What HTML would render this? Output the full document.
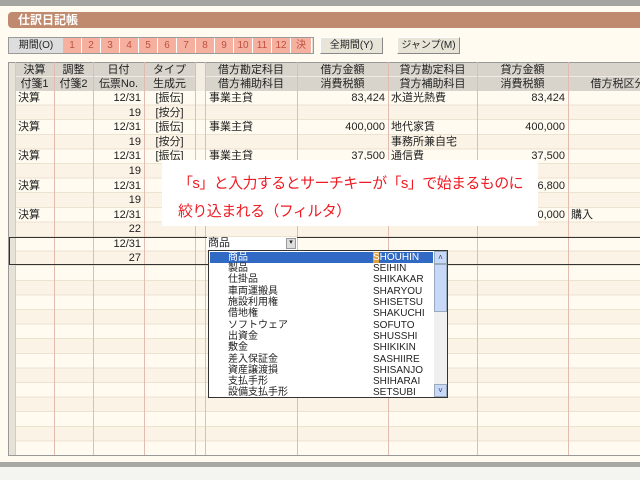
<!DOCTYPE html>
<html><head><meta charset="utf-8"><style>
*{margin:0;padding:0;box-sizing:border-box}
body{width:640px;height:480px;overflow:hidden;background:#fffbf0;font-family:"Liberation Sans","Noto Sans CJK JP",sans-serif;font-size:11px;color:#222;position:relative}
.a{position:absolute}
.t{position:absolute;white-space:nowrap;line-height:14px}
.r{text-align:right}
.c{text-align:center}
.pc{position:absolute;top:38px;height:15px;width:19px;background:#f5b0a0;border-right:1px solid #fff;color:#c05040;text-align:center;line-height:15px;font-size:10px}
.btn{position:absolute;top:37px;height:17px;background:#e8e4d8;border:1px solid;border-color:#fff #888 #888 #fff;text-align:center;line-height:15px;font-size:10px}
.vl{position:absolute;top:62px;height:393px;width:1px;background:#e2bcb0}
.hd{position:absolute;height:14px;line-height:14px;text-align:center;font-size:11px}
.li{position:absolute;left:228px;font-size:10px;line-height:11.2px;white-space:nowrap}
.lr{position:absolute;left:373px;font-size:10px;line-height:11.2px}
</style></head><body>
<div class="a" style="left:0;top:0;width:640px;height:6px;background:#a4a4a0"></div>
<div class="a" style="left:8px;top:12px;width:632px;height:16px;background:#c08a6e;border-radius:4px 0 0 4px"></div>
<div class="t" style="left:18px;top:13px;color:#fff;font-weight:bold;font-size:12px">仕訳日記帳</div>

<div class="a" style="left:8px;top:37px;width:306px;height:17px;border:1px solid #999;background:#ddd"></div>
<div class="t c" style="left:10px;top:38px;width:52px;font-size:10px;line-height:15px">期間(O)</div>
<div class="pc" style="left:63px">1</div><div class="pc" style="left:82px">2</div><div class="pc" style="left:101px">3</div><div class="pc" style="left:120px">4</div><div class="pc" style="left:139px">5</div><div class="pc" style="left:158px">6</div><div class="pc" style="left:177px">7</div><div class="pc" style="left:196px">8</div><div class="pc" style="left:215px">9</div><div class="pc" style="left:234px">10</div><div class="pc" style="left:253px">11</div><div class="pc" style="left:272px">12</div><div class="pc" style="left:291px;width:21px">決</div>
<div class="btn" style="left:320px;width:63px">全期間(Y)</div>
<div class="btn" style="left:397px;width:63px">ジャンプ(M)</div>

<div class="a" style="left:8px;top:62px;width:640px;height:394px;border:1px solid #999;border-right:none;background:#fffbf0"></div>
<div class="a" style="left:9px;top:63px;width:631px;height:28px;background:#d8d4cc"></div>
<div class="a" style="left:15px;top:76px;width:625px;height:1px;background:#f0ece4"></div>
<div class="a" style="left:9px;top:63px;width:6px;height:392px;background:#e6e2d8"></div>
<div class="a" style="left:195px;top:63px;width:10px;height:392px;background:#f3ece0"></div>
<div class="a" style="left:15px;top:91px;width:625px;height:364px;background:repeating-linear-gradient(#fffbf0 0,#fffbf0 13.6px,#ece2d0 13.6px,#ece2d0 14.6px,#fbf3e6 14.6px,#fbf3e6 28.2px,#ece2d0 28.2px,#ece2d0 29.2px)"></div>
<div class="vl" style="left:54px"></div><div class="vl" style="left:93px"></div><div class="vl" style="left:144px"></div><div class="vl" style="left:195px"></div><div class="vl" style="left:205px"></div><div class="vl" style="left:297px"></div><div class="vl" style="left:388px"></div><div class="vl" style="left:477px"></div><div class="vl" style="left:568px"></div>
<div class="vl" style="left:15px;background:#ccc"></div>

<div class="hd" style="left:15px;top:63px;width:39px">決算</div><div class="hd" style="left:54px;top:63px;width:39px">調整</div><div class="hd" style="left:93px;top:63px;width:51px">日付</div><div class="hd" style="left:144px;top:63px;width:51px">タイプ</div><div class="hd" style="left:205px;top:63px;width:92px">借方勘定科目</div><div class="hd" style="left:297px;top:63px;width:91px">借方金額</div><div class="hd" style="left:388px;top:63px;width:89px">貸方勘定科目</div><div class="hd" style="left:477px;top:63px;width:91px">貸方金額</div>
<div class="hd" style="left:15px;top:77px;width:39px">付箋1</div><div class="hd" style="left:54px;top:77px;width:39px">付箋2</div><div class="hd" style="left:93px;top:77px;width:51px">伝票No.</div><div class="hd" style="left:144px;top:77px;width:51px">生成元</div><div class="hd" style="left:205px;top:77px;width:92px">借方補助科目</div><div class="hd" style="left:297px;top:77px;width:91px">消費税額</div><div class="hd" style="left:388px;top:77px;width:89px">貸方補助科目</div><div class="hd" style="left:477px;top:77px;width:91px">消費税額</div><div class="hd" style="left:568px;top:77px;width:100px">借方税区分</div>

<div class="t" style="left:18px;top:91px">決算</div><div class="t r" style="left:93px;top:91px;width:48px">12/31</div><div class="t c" style="left:144px;top:91px;width:51px">[振伝]</div><div class="t" style="left:209px;top:91px">事業主貸</div><div class="t r" style="left:297px;top:91px;width:88px">83,424</div><div class="t" style="left:391px;top:91px">水道光熱費</div><div class="t r" style="left:477px;top:91px;width:88px">83,424</div>
<div class="t r" style="left:93px;top:105.6px;width:48px">19</div><div class="t c" style="left:144px;top:105.6px;width:51px">[按分]</div>
<div class="t" style="left:18px;top:120.2px">決算</div><div class="t r" style="left:93px;top:120.2px;width:48px">12/31</div><div class="t c" style="left:144px;top:120.2px;width:51px">[振伝]</div><div class="t" style="left:209px;top:120.2px">事業主貸</div><div class="t r" style="left:297px;top:120.2px;width:88px">400,000</div><div class="t" style="left:391px;top:120.2px">地代家賃</div><div class="t r" style="left:477px;top:120.2px;width:88px">400,000</div>
<div class="t r" style="left:93px;top:134.8px;width:48px">19</div><div class="t c" style="left:144px;top:134.8px;width:51px">[按分]</div><div class="t" style="left:391px;top:134.8px">事務所兼自宅</div>
<div class="t" style="left:18px;top:149.4px">決算</div><div class="t r" style="left:93px;top:149.4px;width:48px">12/31</div><div class="t c" style="left:144px;top:149.4px;width:51px">[振伝]</div><div class="t" style="left:209px;top:149.4px">事業主貸</div><div class="t r" style="left:297px;top:149.4px;width:88px">37,500</div><div class="t" style="left:391px;top:149.4px">通信費</div><div class="t r" style="left:477px;top:149.4px;width:88px">37,500</div>
<div class="t r" style="left:93px;top:164px;width:48px">19</div>
<div class="t" style="left:18px;top:178.6px">決算</div><div class="t r" style="left:93px;top:178.6px;width:48px">12/31</div><div class="t r" style="left:477px;top:178.6px;width:88px">86,800</div>
<div class="t r" style="left:93px;top:193.2px;width:48px">19</div>
<div class="t" style="left:18px;top:207.8px">決算</div><div class="t r" style="left:93px;top:207.8px;width:48px">12/31</div><div class="t r" style="left:477px;top:207.8px;width:88px">400,000</div><div class="t" style="left:571px;top:207.8px">購入</div>
<div class="t r" style="left:93px;top:222.4px;width:48px">22</div>
<div class="a" style="left:9px;top:237px;width:631px;height:28px;border:1px solid #333;border-right:none"></div>
<div class="t r" style="left:93px;top:237px;width:48px">12/31</div>
<div class="t r" style="left:93px;top:251px;width:48px">27</div>

<div class="a" style="left:162px;top:160px;width:376px;height:66px;background:#fff"></div>
<div class="t" style="left:178px;top:173px;color:#ee1c24;font-size:15px;line-height:22px;letter-spacing:-0.6px">「s」と入力するとサーチキーが「s」で始まるものに</div>
<div class="t" style="left:178px;top:201px;color:#ee1c24;font-size:15px;line-height:22px;letter-spacing:-0.6px">絞り込まれる（フィルタ）</div>

<div class="a" style="left:207px;top:237px;width:90px;height:13px;background:#fff"></div>
<div class="t" style="left:208px;top:236px;font-size:11px">商品</div>
<div class="a" style="left:286px;top:238px;width:10px;height:11px;background:#ddd;border:1px solid #999;font-size:7px;text-align:center;line-height:8px">▾</div>
<div class="a" style="left:208px;top:250px;width:240px;height:148px;background:#fff;border:1px solid #333"></div>
<div class="a" style="left:210px;top:252px;width:223px;height:11px;background:#316ac5"></div>
<div class="a" style="left:373px;top:252px;width:6px;height:11px;background:#e0a040"></div>
<div class="li" style="top:252px;color:#fff">商品</div><div class="lr" style="top:252px;color:#fff">SHOUHIN</div>
<div class="li" style="top:263px">製品</div><div class="lr" style="top:263px">SEIHIN</div>
<div class="li" style="top:274px">仕掛品</div><div class="lr" style="top:274px">SHIKAKAR</div>
<div class="li" style="top:285.5px">車両運搬具</div><div class="lr" style="top:285.5px">SHARYOU</div>
<div class="li" style="top:297px">施設利用権</div><div class="lr" style="top:297px">SHISETSU</div>
<div class="li" style="top:308px">借地権</div><div class="lr" style="top:308px">SHAKUCHI</div>
<div class="li" style="top:319.5px">ソフトウェア</div><div class="lr" style="top:319.5px">SOFUTO</div>
<div class="li" style="top:331px">出資金</div><div class="lr" style="top:331px">SHUSSHI</div>
<div class="li" style="top:342px">敷金</div><div class="lr" style="top:342px">SHIKIKIN</div>
<div class="li" style="top:353.5px">差入保証金</div><div class="lr" style="top:353.5px">SASHIIRE</div>
<div class="li" style="top:365px">資産譲渡損</div><div class="lr" style="top:365px">SHISANJO</div>
<div class="li" style="top:376px">支払手形</div><div class="lr" style="top:376px">SHIHARAI</div>
<div class="li" style="top:387px">設備支払手形</div><div class="lr" style="top:387px">SETSUBI</div>
<div class="a" style="left:434px;top:251px;width:13px;height:146px;background:#f0f0f0"></div>
<div class="a" style="left:434px;top:251px;width:13px;height:13px;background:#c8d8f8;border:1px solid #9ab;font-size:8px;text-align:center;line-height:11px;color:#346">˄</div>
<div class="a" style="left:434px;top:264px;width:13px;height:48px;background:#c8d8f8;border:1px solid #9ab"></div>
<div class="a" style="left:434px;top:384px;width:13px;height:13px;background:#c8d8f8;border:1px solid #9ab;font-size:8px;text-align:center;line-height:11px;color:#346">˅</div>

<div class="a" style="left:0;top:462px;width:640px;height:5px;background:#a8a8a4"></div>
<div class="a" style="left:0;top:467px;width:640px;height:13px;background:#f4f4f0"></div>
</body></html>
